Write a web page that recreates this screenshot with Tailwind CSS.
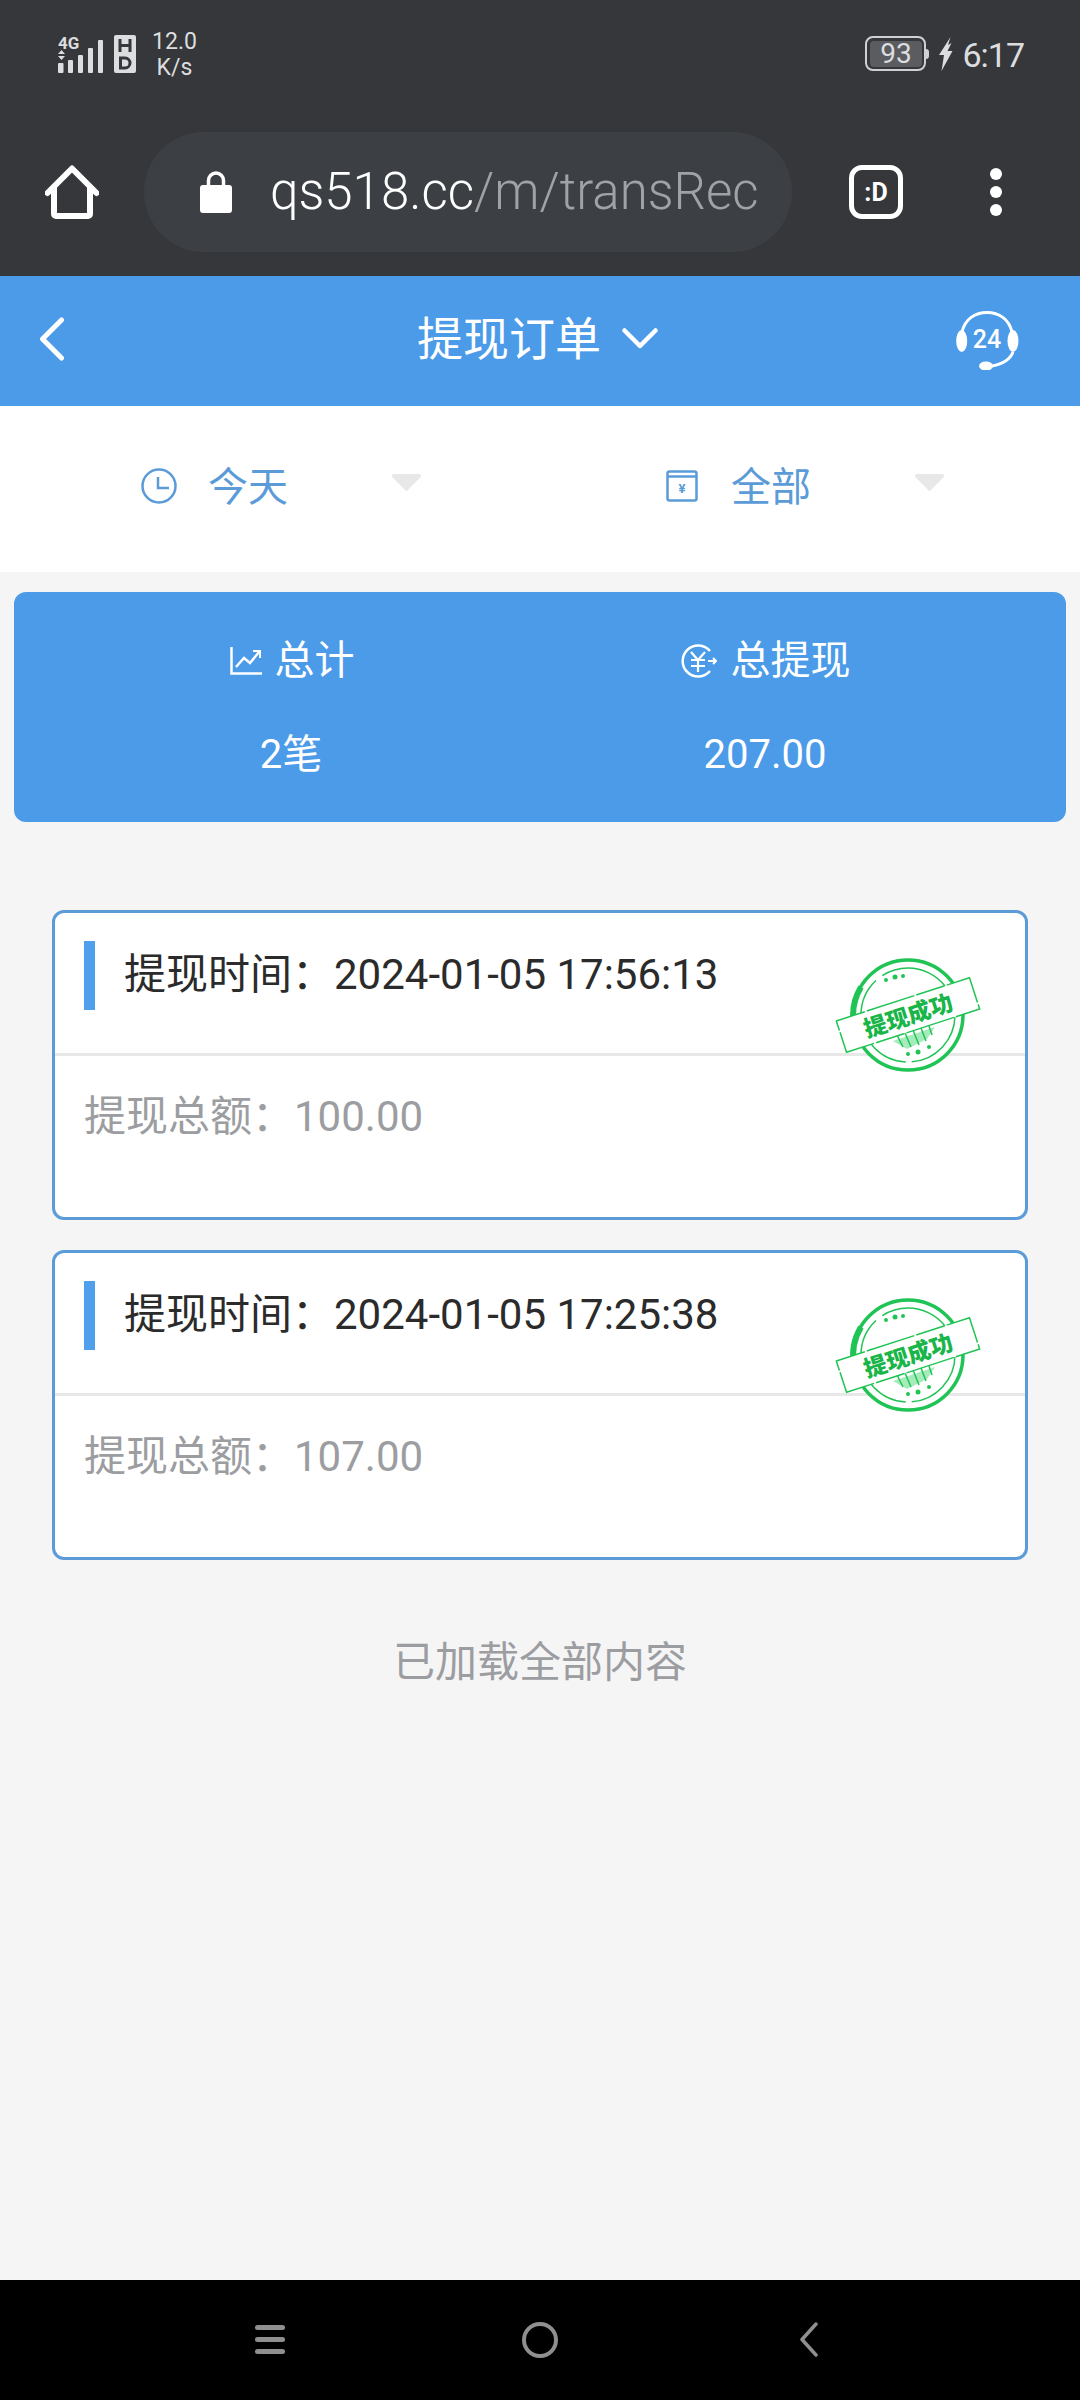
<!DOCTYPE html>
<html lang="zh">
<head>
<meta charset="utf-8">
<script src="https://cdn.jsdelivr.net/npm/@tailwindcss/browser@4"></script>
</head>
<body class="m-0">
<div class="w-[1080px] h-[2400px] flex flex-col bg-[#f5f5f6] overflow-hidden font-['Roboto','Noto_Sans_CJK_SC',sans-serif]">

  <!-- status + browser -->
  <div class="h-[276px] shrink-0 bg-[#35373b] flex flex-col">
    <div class="h-[132px] shrink-0 flex items-start justify-between pl-[58px] pr-[56px] pt-[35px] text-[#dcdddf]">
      <div class="flex items-start">
        <svg width="45" height="38" viewBox="0 0 45 38" fill="#dcdddf" class="overflow-visible">
          <text x="0" y="13.500" font-size="17" font-weight="700" font-family="Roboto" fill="#dcdddf">4G</text>
          <path d="M3.500 15l3.500 4H0zM3.500 25l3.500-4H0z"/>
          <rect x="0" y="28" width="5.500" height="10" rx="1"/><rect x="10" y="25" width="5" height="13" rx="1"/><rect x="20" y="20" width="5" height="18" rx="1"/><rect x="30" y="13" width="5" height="25" rx="1"/><rect x="40" y="5" width="5" height="33" rx="1"/>
        </svg>
        <svg width="22" height="38" viewBox="0 0 22 38" class="ml-[11px]">
          <rect width="22" height="38" rx="2" fill="#dcdddf"/>
          <path d="M6 4v13M16 4v13M6 10.500h10" stroke="#35373b" stroke-width="3" fill="none"/>
          <path d="M6.500 23h4.500a5 5 0 0 1 0 10H6.500z" fill="none" stroke="#35373b" stroke-width="3"/>
        </svg>
        <div class="ml-[16px] -mt-[6px] flex flex-col items-center text-[23px] leading-[26px] w-[45px]"><span>12.0</span><span>K/s</span></div>
      </div>
      <div class="flex items-start">
        <div class="flex items-center w-[65px] h-[35px] mt-[1px]">
          <div class="w-[61px] h-[35px] rounded-[8px] border-[2.500px] border-[#cfd0d2] p-[2.500px] shrink-0">
            <div class="w-full h-full bg-[#5a5c60] rounded-[4px] flex items-center justify-center text-[28px] leading-none">93</div>
          </div>
          <div class="w-[3px] h-[10px] bg-[#cfd0d2] rounded-r-[3px] shrink-0"></div>
        </div>
        <svg width="15" height="34" viewBox="0 0 15 34" fill="#dcdddf" class="ml-[8px] mt-[2px]"><path d="M12.500 0 1 18h5L3.500 34 14.500 14H9.500L13.500 6 10 8z"/></svg>
        <span class="ml-[9px] mt-[3px] text-[34px] leading-[35px] tracking-[-1px]">6:17</span>
      </div>
    </div>
    <div class="h-[120px] shrink-0 flex items-center">
      <svg width="54" height="54" viewBox="0 0 54 54" class="ml-[45px] shrink-0" fill="none" stroke="#fff" stroke-width="6" stroke-linejoin="round" stroke-linecap="round"><path d="M2.500 28 27 3.500 51.500 28"/><path d="M9 23v26a2 2 0 0 0 2 2h32a2 2 0 0 0 2-2V23"/></svg>
      <div class="ml-[45px] w-[648px] h-[120px] shrink-0 rounded-[60px] bg-[#3c3f43] flex items-center pl-[56px] overflow-hidden">
        <svg width="32" height="43" viewBox="0 0 32 43" class="shrink-0 -mt-[2px]"><path d="M8.500 16V10.500a7.500 7.500 0 0 1 15 0V16" fill="none" stroke="#fff" stroke-width="3.500"/><rect y="15" width="32" height="28" rx="3" fill="#fff"/></svg>
        <div class="ml-[38px] w-[491px] shrink-0 overflow-hidden whitespace-nowrap text-[51px] leading-[64px] text-[#a0a2a5] font-['Roboto'] font-light"><span class="text-white">qs518.cc</span>/m/transRecord</div>
      </div>
      <div class="ml-[57px] w-[54px] h-[54px] rounded-[13px] border-[5px] border-white flex items-center justify-center text-white text-[25px] leading-none font-bold font-['Roboto'] shrink-0">:D</div>
      <div class="ml-[87px] flex flex-col gap-[6px] shrink-0">
        <div class="w-[12px] h-[12px] rounded-full bg-white"></div>
        <div class="w-[12px] h-[12px] rounded-full bg-white"></div>
        <div class="w-[12px] h-[12px] rounded-full bg-white"></div>
      </div>
    </div>
    <div class="flex-1"></div>
  </div>

  <!-- header -->
  <div class="h-[130px] shrink-0 bg-[#4b9be9] flex items-center pl-[40px] pr-[61px] text-white">
    <svg width="24" height="44" viewBox="0 0 24 44" fill="none" stroke="#fff" stroke-width="5" stroke-linecap="round" stroke-linejoin="round" class="-mt-[4px] shrink-0"><path d="M21.500 3 2.500 22l19 19"/></svg>
    <div class="flex items-center gap-[21px] ml-[353px] -mt-[4px]">
      <span class="text-[46px] leading-[60px]">提现订单</span>
      <svg width="36" height="22" viewBox="0 0 36 22" fill="none" stroke="#fff" stroke-width="4.500" stroke-linecap="round" stroke-linejoin="round"><path d="M2.500 2.500 18 18 33.500 2.500"/></svg>
    </div>
    <svg width="63" height="59" viewBox="0 0 63 59" fill="none" class="ml-auto -mt-[2px] shrink-0">
      <path d="M6 21C9 8 19 1.500 31 1.500S53 8 56 21" stroke="#fff" stroke-width="3"/>
      <path d="M57 41C54 49 46 53 36 55" stroke="#fff" stroke-width="3"/>
      <ellipse cx="5.700" cy="30" rx="5.500" ry="11" fill="#fff"/><ellipse cx="57" cy="30" rx="5.500" ry="11" fill="#fff"/>
      <ellipse cx="30" cy="55" rx="7" ry="4.500" fill="#fff"/>
      <text x="31" y="37" text-anchor="middle" font-size="25" font-weight="500" font-family="Roboto" fill="#fff">24</text>
    </svg>
  </div>

  <!-- filters -->
  <div class="h-[166px] shrink-0 bg-white grid grid-cols-2 text-[#5b9bd8] text-[40px]">
    <div class="flex items-center pl-[141px] -mt-[5px]">
      <svg width="36" height="36" viewBox="0 0 36 36" fill="none" stroke="#5b9bd8" stroke-width="2.500" class="shrink-0 -mt-[2px]"><circle cx="18" cy="18" r="16.500"/><path d="M17 9v11h11"/></svg>
      <span class="ml-[31px] leading-[50px] mt-[2px]">今天</span>
      <svg width="29" height="17" viewBox="0 0 29 17" fill="#e8e8e8" class="ml-[104px] -mt-[8px] shrink-0"><path d="M2 0h25a2 2 0 0 1 1.500 3.300L15.500 16.500a1.500 1.500 0 0 1-2 0L.5 3.300A2 2 0 0 1 2 0z"/></svg>
    </div>
    <div class="flex items-center pl-[126px] -mt-[5px]">
      <svg width="32" height="32" viewBox="0 0 32 32" fill="none" stroke="#5b9bd8" stroke-width="2.500" class="shrink-0 -mt-[2px]"><rect x="1.500" y="1.500" width="29" height="29" rx="2"/><path d="M1.500 6.500h29"/><text x="16" y="23" text-anchor="middle" font-size="13" font-weight="700" font-family="Roboto" fill="#5b9bd8" stroke="none">¥</text></svg>
      <span class="ml-[33px] leading-[50px] mt-[2px]">全部</span>
      <svg width="29" height="17" viewBox="0 0 29 17" fill="#e8e8e8" class="ml-[104px] -mt-[8px] shrink-0"><path d="M2 0h25a2 2 0 0 1 1.500 3.300L15.500 16.500a1.500 1.500 0 0 1-2 0L.5 3.300A2 2 0 0 1 2 0z"/></svg>
    </div>
  </div>

  <!-- summary -->
  <div class="mx-[14px] mt-[20px] h-[230px] shrink-0 rounded-[12px] bg-[#4b9be9] text-white grid grid-cols-[556px_390px] text-[40px] leading-[44px]">
    <div class="flex flex-col items-center pt-[47px] gap-[50px]">
      <div class="flex items-center gap-[13px]">
        <svg width="32" height="28" viewBox="0 0 32 28" fill="none" stroke="#fff" stroke-width="2.500"><path d="M1.500 0v26.500H32"/><path d="M6 20l8-9 6 5 9-11"/><path d="M23 4h7v7" stroke-width="2"/></svg>
        <span>总计</span>
      </div>
      <span class="-ml-[2px]">2笔</span>
    </div>
    <div class="flex flex-col items-center pt-[47px] gap-[50px]">
      <div class="flex items-center gap-[14px] ml-[1px]">
        <svg width="36" height="34" viewBox="0 0 36 34" fill="none" stroke="#fff" stroke-width="2.500"><path d="M29 7A15.500 15.500 0 1 0 29 27"/><path d="M10 8l7 8 7-8M10 16h14M10 22h14M17 16v12" stroke-width="2.200"/><path d="M27 17h8M32 14l3 3-3 3" stroke-width="2"/></svg>
        <span>总提现</span>
      </div>
      <span>207.00</span>
    </div>
  </div>

  <!-- cards -->
  <div class="mx-[52px] mt-[88px] flex flex-col gap-[30px]">
    <div class="relative h-[310px] rounded-[12px] border-[3px] border-[#5b9bd8] bg-white">
      <div class="h-[143px] border-b-[3px] border-[#e8e8e8] pt-[28px] pl-[29px]">
        <div class="h-[69px] flex items-center">
          <div class="w-[11px] h-[69px] bg-[#4f9fec] shrink-0"></div>
          <div class="ml-[29px] text-[42px] leading-[60px] text-[#2b2b2b] -mt-[2px]">提现时间：2024-01-05 17:56:13</div>
        </div>
      </div>
      <div class="pl-[29px] pt-[31px] text-[42px] leading-[60px] text-[#9c9da1]">提现总额：100.00</div>
      <svg width="146" height="116" viewBox="0 0 146 116" class="absolute left-[780px] top-[44px]" fill="none">
        <circle cx="73" cy="58" r="55" fill="#fff" stroke="#20c455" stroke-width="3.500"/>
        <path d="M26 30A55 55 0 0 0 19 68" stroke="#20c455" stroke-width="6"/>
        <circle cx="73" cy="58" r="47" stroke="#20c455" stroke-width="1.500" stroke-dasharray="70 6 110 8"/>
        <g fill="#20c455"><circle cx="51" cy="23" r="2"/><circle cx="60" cy="20" r="2.500"/><circle cx="68" cy="19" r="2"/><circle cx="73" cy="97" r="2"/><circle cx="83" cy="95" r="2.500"/><circle cx="94" cy="90" r="2"/></g>
        <path d="M58 84 100 70 92 82 72 92z" fill="#a5ebbb"/>
        <path d="M62 78l6 12M70 76l6 14M78 73l6 15M86 71l5 13M94 69l3 9" stroke="#20c455" stroke-width="1.500"/>
        <g transform="rotate(-18 73 58)">
          <rect x="3" y="41.500" width="140" height="33" fill="#fff" stroke="#20c455" stroke-width="1.500" stroke-dasharray="30 2 50 2"/>
          <text x="73" y="67" text-anchor="middle" font-size="23" font-weight="900" font-family="Noto Sans CJK SC" fill="#18b548">提现成功</text>
        </g>
      </svg>
    </div>
    <div class="relative h-[310px] rounded-[12px] border-[3px] border-[#5b9bd8] bg-white">
      <div class="h-[143px] border-b-[3px] border-[#e8e8e8] pt-[28px] pl-[29px]">
        <div class="h-[69px] flex items-center">
          <div class="w-[11px] h-[69px] bg-[#4f9fec] shrink-0"></div>
          <div class="ml-[29px] text-[42px] leading-[60px] text-[#2b2b2b] -mt-[2px]">提现时间：2024-01-05 17:25:38</div>
        </div>
      </div>
      <div class="pl-[29px] pt-[31px] text-[42px] leading-[60px] text-[#9c9da1]">提现总额：107.00</div>
      <svg width="146" height="116" viewBox="0 0 146 116" class="absolute left-[780px] top-[44px]" fill="none">
        <circle cx="73" cy="58" r="55" fill="#fff" stroke="#20c455" stroke-width="3.500"/>
        <path d="M26 30A55 55 0 0 0 19 68" stroke="#20c455" stroke-width="6"/>
        <circle cx="73" cy="58" r="47" stroke="#20c455" stroke-width="1.500" stroke-dasharray="70 6 110 8"/>
        <g fill="#20c455"><circle cx="51" cy="23" r="2"/><circle cx="60" cy="20" r="2.500"/><circle cx="68" cy="19" r="2"/><circle cx="73" cy="97" r="2"/><circle cx="83" cy="95" r="2.500"/><circle cx="94" cy="90" r="2"/></g>
        <path d="M58 84 100 70 92 82 72 92z" fill="#a5ebbb"/>
        <path d="M62 78l6 12M70 76l6 14M78 73l6 15M86 71l5 13M94 69l3 9" stroke="#20c455" stroke-width="1.500"/>
        <g transform="rotate(-18 73 58)">
          <rect x="3" y="41.500" width="140" height="33" fill="#fff" stroke="#20c455" stroke-width="1.500" stroke-dasharray="30 2 50 2"/>
          <text x="73" y="67" text-anchor="middle" font-size="23" font-weight="900" font-family="Noto Sans CJK SC" fill="#18b548">提现成功</text>
        </g>
      </svg>
    </div>
  </div>

  <div class="mt-[73px] text-center text-[42px] leading-[60px] text-[#9c9da1]">已加载全部内容</div>

  <div class="flex-1"></div>

  <!-- nav -->
  <div class="h-[120px] shrink-0 bg-black flex items-center justify-between pl-[255px] pr-[262px]">
    <div class="flex flex-col gap-[7.500px] -mt-[1px]">
      <div class="w-[30px] h-[4.500px] rounded-full bg-[#8f8f8f]"></div>
      <div class="w-[30px] h-[4.500px] rounded-full bg-[#8f8f8f]"></div>
      <div class="w-[30px] h-[4.500px] rounded-full bg-[#8f8f8f]"></div>
    </div>
    <div class="w-[36px] h-[36px] rounded-full border-[4px] border-[#8f8f8f] -ml-[5px] -mt-[1px]"></div>
    <svg width="18" height="35" viewBox="0 0 18 35" fill="none" stroke="#8f8f8f" stroke-width="3.500" stroke-linecap="round" stroke-linejoin="round" class="-mt-[1px]"><path d="M16 2 2 17.500 16 33"/></svg>
  </div>
</div>
</body>
</html>
